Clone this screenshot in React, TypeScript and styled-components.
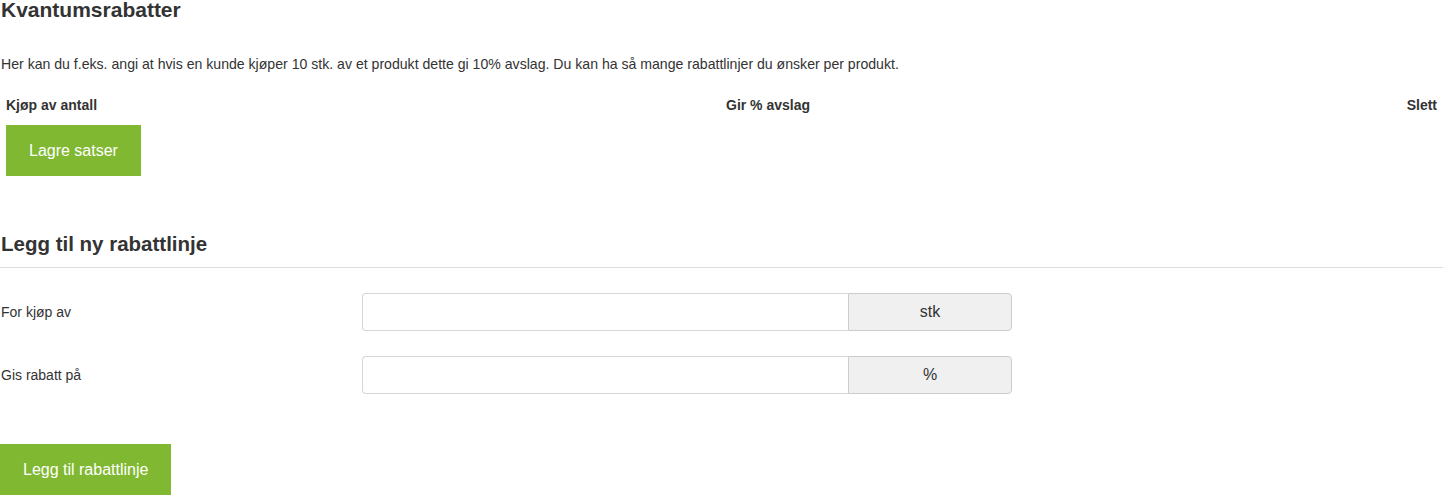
import { FC } from 'react';
import styled, { createGlobalStyle } from 'styled-components';

const GlobalStyle = createGlobalStyle`
  body {
    margin: 0;
    background: #fff;
    font-family: 'Liberation Sans', Arial, sans-serif;
    color: #333;
  }
`;

const Page = styled.div`
  width: 1443px;
`;

const Title = styled.h2`
  margin: 0;
  font-size: 21px;
  line-height: 20px;
  font-weight: bold;
  padding-left: 1px;
`;

const Intro = styled.p`
  margin: 36px 0 0 1px;
  font-size: 14.1px;
  line-height: 16px;
`;

const TableHead = styled.div`
  display: grid;
  grid-template-columns: 720px 1fr auto;
  margin-top: 25px;
  font-size: 14px;
  font-weight: bold;
  line-height: 16px;
`;

const HeadCell = styled.div<{ $right?: boolean }>`
  padding: 0 6px;
  text-align: ${(p) => (p.$right ? 'right' : 'left')};
`;

const GreenButton = styled.button<{ $indent?: number }>`
  display: block;
  margin-left: ${(p) => p.$indent ?? 0}px;
  background: #80b832;
  color: #fff;
  border: none;
  border-radius: 0;
  font-family: 'Liberation Sans', Arial, sans-serif;
  font-size: 16px;
  height: 51px;
  padding: 0 23px;
  cursor: pointer;
`;

const SaveWrap = styled.div`
  margin-top: 12px;
`;

const SubTitle = styled.h3`
  margin: 57px 0 0 1px;
  font-size: 20.5px;
  line-height: 22px;
  font-weight: bold;
`;

const Rule = styled.hr`
  margin: 12px 0 0;
  border: none;
  border-top: 1px solid #ddd;
`;

const FormRow = styled.div<{ $top: number }>`
  display: grid;
  grid-template-columns: 362px 650px;
  align-items: center;
  margin-top: ${(p) => p.$top}px;
`;

const Label = styled.label`
  font-size: 14px;
  padding-left: 1px;
  margin-top: -1px;
`;

const InputGroup = styled.div`
  display: flex;
  height: 38px;
`;

const TextInput = styled.input`
  width: 486px;
  box-sizing: border-box;
  border: 1px solid #d6d6d6;
  border-right: none;
  border-radius: 4px 0 0 4px;
  padding: 0 10px;
  font-size: 14px;
  font-family: inherit;
  outline: none;
`;

const Addon = styled.span`
  flex: 1;
  display: flex;
  align-items: center;
  justify-content: center;
  background: #f0f0f0;
  border: 1px solid #ccc;
  border-radius: 0 4px 4px 0;
  font-size: 16px;
  color: #333;
`;

const AddWrap = styled.div`
  margin-top: 50px;
`;

const Field: FC<{ label: string; unit: string; top: number }> = ({ label, unit, top }) => (
  <FormRow $top={top}>
    <Label>{label}</Label>
    <InputGroup>
      <TextInput type="text" />
      <Addon>{unit}</Addon>
    </InputGroup>
  </FormRow>
);

const App: FC = () => (
  <Page>
    <GlobalStyle />
    <Title>Kvantumsrabatter</Title>
    <Intro>
      Her kan du f.eks. angi at hvis en kunde kjøper 10 stk. av et produkt dette gi 10% avslag. Du kan ha så mange
      rabattlinjer du ønsker per produkt.
    </Intro>
    <TableHead>
      <HeadCell>Kjøp av antall</HeadCell>
      <HeadCell>Gir % avslag</HeadCell>
      <HeadCell $right>Slett</HeadCell>
    </TableHead>
    <SaveWrap>
      <GreenButton $indent={6}>Lagre satser</GreenButton>
    </SaveWrap>
    <SubTitle>Legg til ny rabattlinje</SubTitle>
    <Rule />
    <Field label="For kjøp av" unit="stk" top={25} />
    <Field label="Gis rabatt på" unit="%" top={25} />
    <AddWrap>
      <GreenButton>Legg til rabattlinje</GreenButton>
    </AddWrap>
  </Page>
);

export default App;
